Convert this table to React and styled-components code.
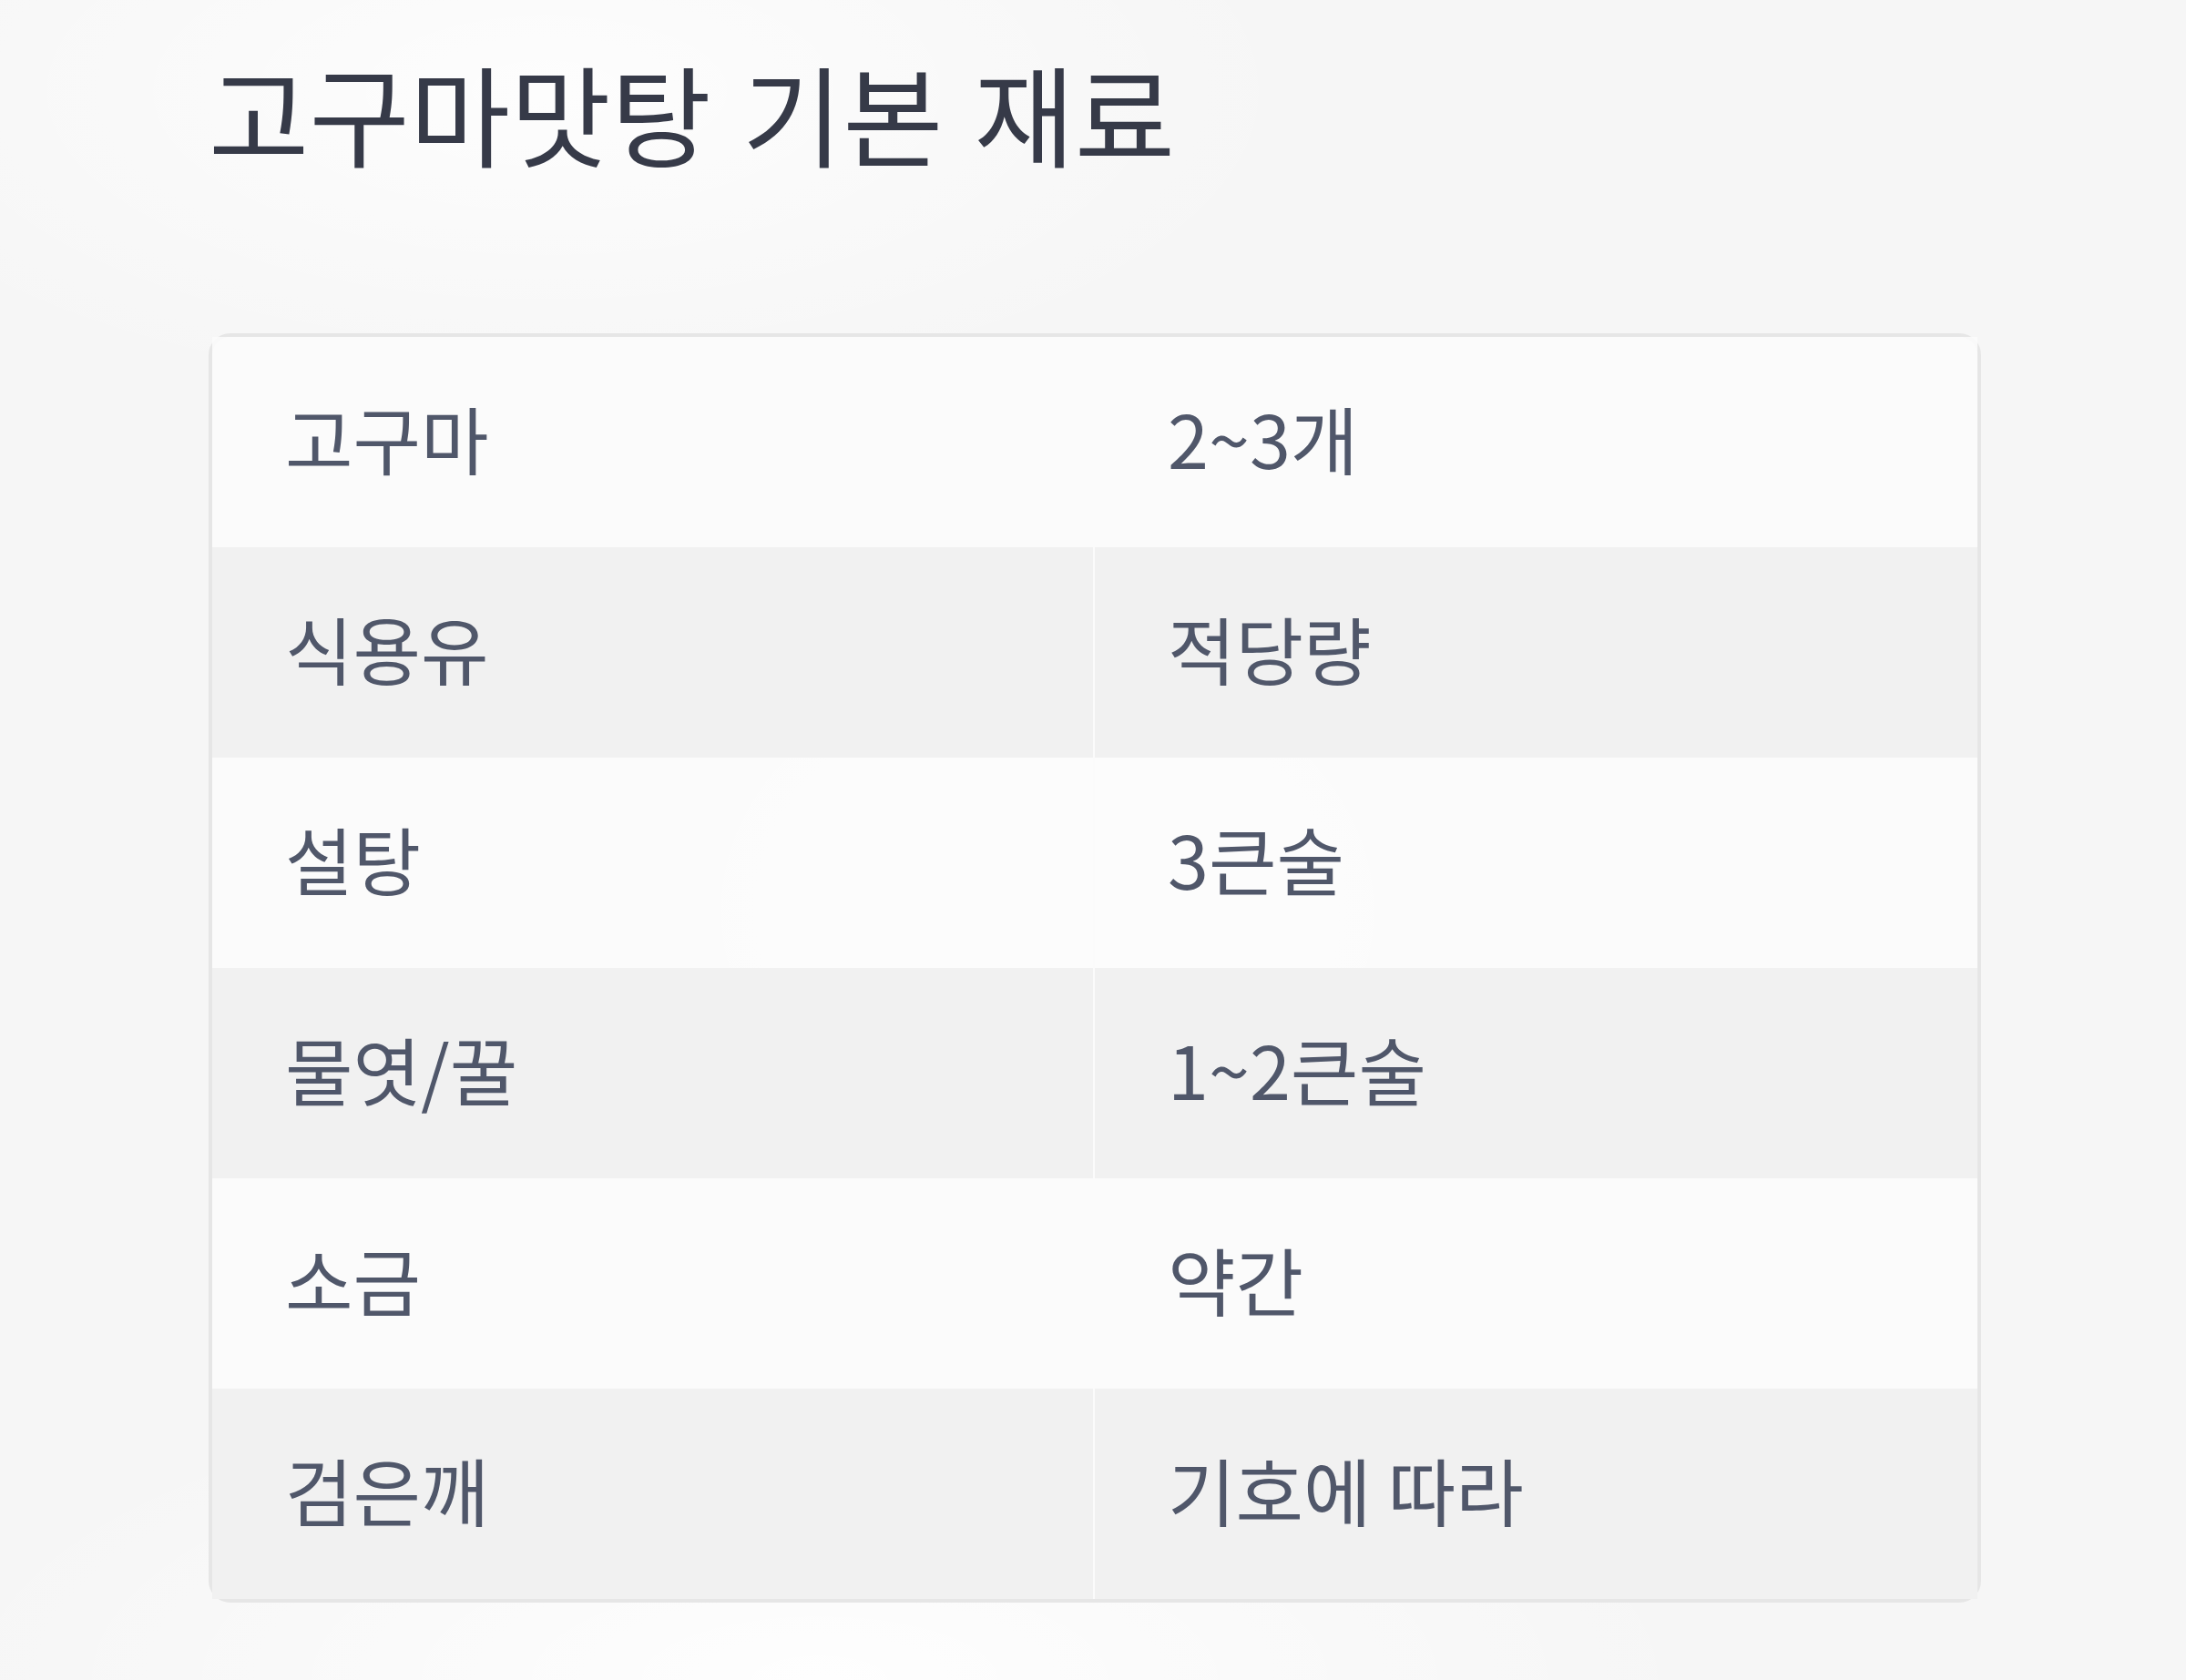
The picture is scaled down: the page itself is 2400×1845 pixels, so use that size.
import styled, { createGlobalStyle } from "styled-components";

const GlobalStyle = createGlobalStyle`
  html, body {
    margin: 0;
    padding: 0;
  }
  body {
    background: #f7f7f7;
    font-family: "Noto Sans CJK KR", "Noto Sans", sans-serif;
  }
`;

const Page = styled.div`
  min-height: 1845px;
  box-sizing: border-box;
  padding: 60px 0 0 229px;
  background:
    radial-gradient(ellipse 900px 700px at 1150px 1000px, rgba(255, 255, 255, 0.9), rgba(255, 255, 255, 0) 70%),
    radial-gradient(ellipse 1200px 500px at 600px 100px, rgba(255, 255, 255, 0.8), rgba(255, 255, 255, 0) 70%),
    radial-gradient(ellipse 1400px 500px at 900px 1845px, rgba(255, 255, 255, 0.9), rgba(255, 255, 255, 0) 70%),
    #f6f6f6;
`;

const Title = styled.h1`
  margin: 0;
  font-family: Inter, "Noto Sans CJK KR", sans-serif;
  font-size: 120px;
  line-height: 1.2;
  font-weight: 400;
  color: #363a48;
`;

const Table = styled.table`
  margin-top: 162px;
  width: 1946px;
  border: 4px solid #e6e6e6;
  border-radius: 24px;
  border-collapse: separate;
  border-spacing: 0;
  table-layout: fixed;
`;

const Row = styled.tr`
  background: ${(p) => (p.$shade ? "#f1f1f1" : "rgba(252, 252, 252, 0.85)")};
`;

const Cell = styled.td`
  height: 231px;
  box-sizing: border-box;
  padding: 0 0 12px 80px;
  vertical-align: middle;
  font-size: 81px;
  line-height: 1.2;
  color: #50576a;
  border-right: ${(p) => (p.$first ? "2px solid #fbfbfb" : "none")};
`;

const items = [
  ["고구마", "2~3개"],
  ["식용유", "적당량"],
  ["설탕", "3큰술"],
  ["물엿/꿀", "1~2큰술"],
  ["소금", "약간"],
  ["검은깨", "기호에 따라"],
];

const App = () => {
  return (
    <Page>
      <GlobalStyle />
      <Title>고구마맛탕 기본 재료</Title>
      <Table>
        <tbody>
          {items.map(([name, amount], i) => (
            <Row key={name} $shade={i % 2 === 1}>
              <Cell $first>{name}</Cell>
              <Cell>{amount}</Cell>
            </Row>
          ))}
        </tbody>
      </Table>
    </Page>
  );
};

export default App;
